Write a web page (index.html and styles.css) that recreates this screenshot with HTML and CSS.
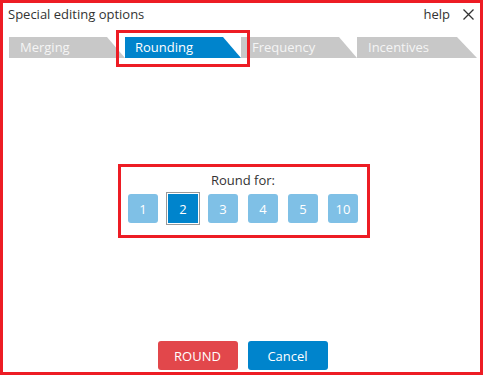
FILE: index.html
```html
<!DOCTYPE html>
<html lang="en">

<head>
    <meta charset="UTF-8">
    <meta name="viewport" content="width=device-width, initial-scale=1.0">
    <title>Special editing options</title>
    <link rel="stylesheet" href="styles.css">
</head>

<body>
    <div class="dialog">
        <header class="title-bar">
            <div class="title">Special editing options</div>
            <div class="title-actions">
                <a href="#" class="help">help</a>
                <button class="close" aria-label="Close">
                    <svg width="11" height="11" viewBox="0 0 11 11">
                        <path d="M0.5 0.5 L10.5 10.5 M10.5 0.5 L0.5 10.5" stroke="#333" stroke-width="1.3" fill="none" />
                    </svg>
                </button>
            </div>
        </header>

        <nav class="tabs">
            <div class="tab">Merging</div>
            <div class="tab active">Rounding</div>
            <div class="tab">Frequency</div>
            <div class="tab last">Incentives</div>
            <div class="tab-highlight"></div>
        </nav>

        <section class="content">
            <div class="round-group">
                <div class="round-label">Round for:</div>
                <div class="round-options">
                    <button class="option">1</button>
                    <button class="option selected">2</button>
                    <button class="option">3</button>
                    <button class="option">4</button>
                    <button class="option">5</button>
                    <button class="option">10</button>
                </div>
            </div>
        </section>

        <footer class="actions">
            <button class="btn btn-round">ROUND</button>
            <button class="btn btn-cancel">Cancel</button>
        </footer>
    </div>
</body>

</html>
```

FILE: styles.css
```css
body {
    margin: 0;
    font-family: 'Open Sans', 'Noto Sans', sans-serif;
    background: #fff;
    color: #333;
}

.dialog {
    width: 483px;
    height: 375px;
    box-sizing: border-box;
    border: 3px solid #ed1c24;
    display: flex;
    flex-direction: column;
    background: #fff;
}

.title-bar {
    display: flex;
    justify-content: space-between;
    align-items: center;
    padding: 1px 6px 0 5px;
    height: 20px;
    font-size: 13px;
}

.title-actions {
    display: flex;
    align-items: center;
    gap: 13px;
}

.help {
    color: #333;
    text-decoration: none;
}

.close {
    border: none;
    background: none;
    padding: 0;
    width: 11px;
    height: 11px;
    display: flex;
}

/* Tabs */
.tabs {
    position: relative;
    display: flex;
    margin-top: 13px;
    padding-left: 6px;
    height: 21px;
}

.tab {
    width: 116px;
    height: 21px;
    line-height: 21px;
    padding-left: 11px;
    box-sizing: border-box;
    background: #c8c8c8;
    color: #f5f5f5;
    font-size: 13px;
    clip-path: polygon(0 0, calc(100% - 18px) 0, 100% 100%, 0 100%);
}

.tab.active {
    background: #0084cc;
    color: #fff;
    padding-left: 10px;
}

.tab.last {
    width: 120px;
    clip-path: polygon(0 0, calc(100% - 20px) 0, 100% 100%, 0 100%);
}

.tab-highlight {
    position: absolute;
    left: 113px;
    top: -7px;
    width: 134px;
    height: 37px;
    box-sizing: border-box;
    border: 3px solid #ed1c24;
}

/* Rounding group */
.content {
    flex: 1;
    display: flex;
    justify-content: center;
    align-items: flex-start;
    padding-top: 106px;
}

.round-group {
    width: 252px;
    height: 74px;
    box-sizing: border-box;
    border: 3px solid #ed1c24;
    margin-left: 5px;
    padding: 4px 9px 0 7px;
    text-align: center;
}

.round-label {
    font-size: 13px;
    line-height: 18px;
    color: #333;
}

.round-options {
    display: flex;
    gap: 10px;
    margin-top: 5px;
}

.option {
    width: 30px;
    height: 29px;
    border: none;
    border-radius: 3px;
    background: #7fc0e6;
    color: #fff;
    font-family: inherit;
    font-size: 13px;
    padding: 0;
}

.selected {
    background: #0084cc;
    border-radius: 0;
    outline: 1px solid #999;
    outline-offset: 1px;
}

/* Footer buttons */
.actions {
    display: flex;
    justify-content: center;
    gap: 10px;
    padding-bottom: 2px;
    margin-left: 2px;
}

.btn {
    width: 80px;
    height: 29px;
    border: none;
    border-radius: 3px;
    color: #fff;
    font-family: inherit;
    font-size: 13px;
    padding: 0;
}

.btn-round {
    background: #e2474b;
}

.btn-cancel {
    background: #0084cc;
}
```
